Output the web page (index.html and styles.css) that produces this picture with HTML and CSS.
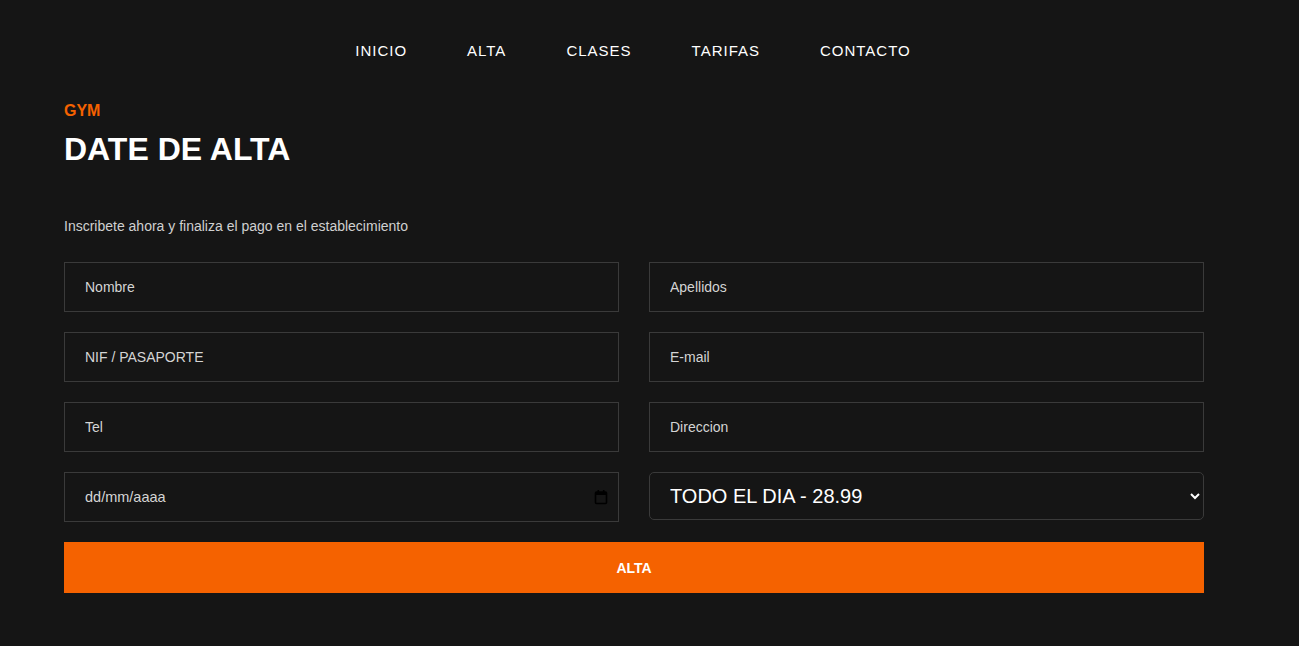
FILE: index.html
```html
<!DOCTYPE html>
<html lang="es">
<head>
<meta charset="utf-8">
<title>Gym - Date de alta</title>
<link rel="stylesheet" href="styles.css">
</head>
<body>
<div class="container">
  <nav class="nav">
    <a href="#">INICIO</a>
    <a href="#">ALTA</a>
    <a href="#">CLASES</a>
    <a href="#">TARIFAS</a>
    <a href="#">CONTACTO</a>
  </nav>
  <p class="kicker">GYM</p>
  <h1 class="title">DATE DE ALTA</h1>
  <p class="lead">Inscribete ahora y finaliza el pago en el establecimiento</p>
  <form class="form">
    <input class="field" type="text" placeholder="Nombre">
    <input class="field" type="text" placeholder="Apellidos">
    <input class="field" type="text" placeholder="NIF / PASAPORTE">
    <input class="field" type="email" placeholder="E-mail">
    <input class="field" type="tel" placeholder="Tel">
    <input class="field" type="text" placeholder="Direccion">
    <div class="field date">
      <span class="date-text">dd/mm/aaaa</span>
      <svg class="cal" width="14" height="16" viewBox="0 0 14 16"><rect x="1.5" y="3" width="11" height="11.5" rx="1" fill="none" stroke="#000" stroke-width="1.6"/><rect x="1.5" y="3" width="11" height="3" fill="#000"/><rect x="3.5" y="1" width="1.6" height="3" fill="#000"/><rect x="8.9" y="1" width="1.6" height="3" fill="#000"/></svg>
    </div>
    <select class="select">
      <option>TODO EL DIA - 28.99</option>
      <option>MAÑANAS - 19.99</option>
    </select>
    <button class="btn" type="button">ALTA</button>
  </form>
</div>
</body>
</html>
```
FILE: styles.css
```css
* { box-sizing: border-box; }
html, body { margin: 0; background: #151515; }
body { font-family: "Liberation Sans", Arial, sans-serif; color: #fff; }
.container { width: 1140px; margin-left: 64px; }
.nav { height: 100px; display: flex; justify-content: center; align-items: center; }
.nav a { color: #fff; text-decoration: none; font-size: 15px; letter-spacing: 1px; padding: 0 30px; }
.nav a:first-child { margin-left: -2px; }
.kicker { margin: 0; padding-top: 2px; height: 19px; line-height: 18px; font-size: 16px; font-weight: bold; color: #f56200; }
.title { margin: 11px 0 0; font-size: 32px; line-height: 38px; font-weight: bold; color: #fff; }
.lead { margin: 48px 0 0; font-size: 14px; line-height: 20px; color: #d0d0d0; }
.form { margin-top: 26px; display: grid; grid-template-columns: 1fr 1fr; column-gap: 30px; row-gap: 20px; }
.field { height: 50px; background: #151515; border: 1px solid #3a3a3a; border-radius: 0; padding: 0 20px; font-family: "Liberation Sans", Arial, sans-serif; font-size: 14px; color: #ddd; outline: none; }
.field::placeholder { color: #d4d4d4; }
.date { display: flex; align-items: center; justify-content: space-between; padding-right: 10px; }
.date-text { color: #d4d4d4; font-size: 14.5px; }
.cal { display: block; }
.select { height: 48px; margin-top: 0; background: #151515; border: 1px solid #3a3a3a; border-radius: 5px; color: #fff; font-family: "Liberation Sans", Arial, sans-serif; font-size: 20px; padding: 0 16px; }
.btn { grid-column: 1 / span 2; height: 51px; border: 0; background: #f56200; color: #fff; font-family: "Liberation Sans", Arial, sans-serif; font-size: 14px; font-weight: bold; cursor: pointer; }
```
